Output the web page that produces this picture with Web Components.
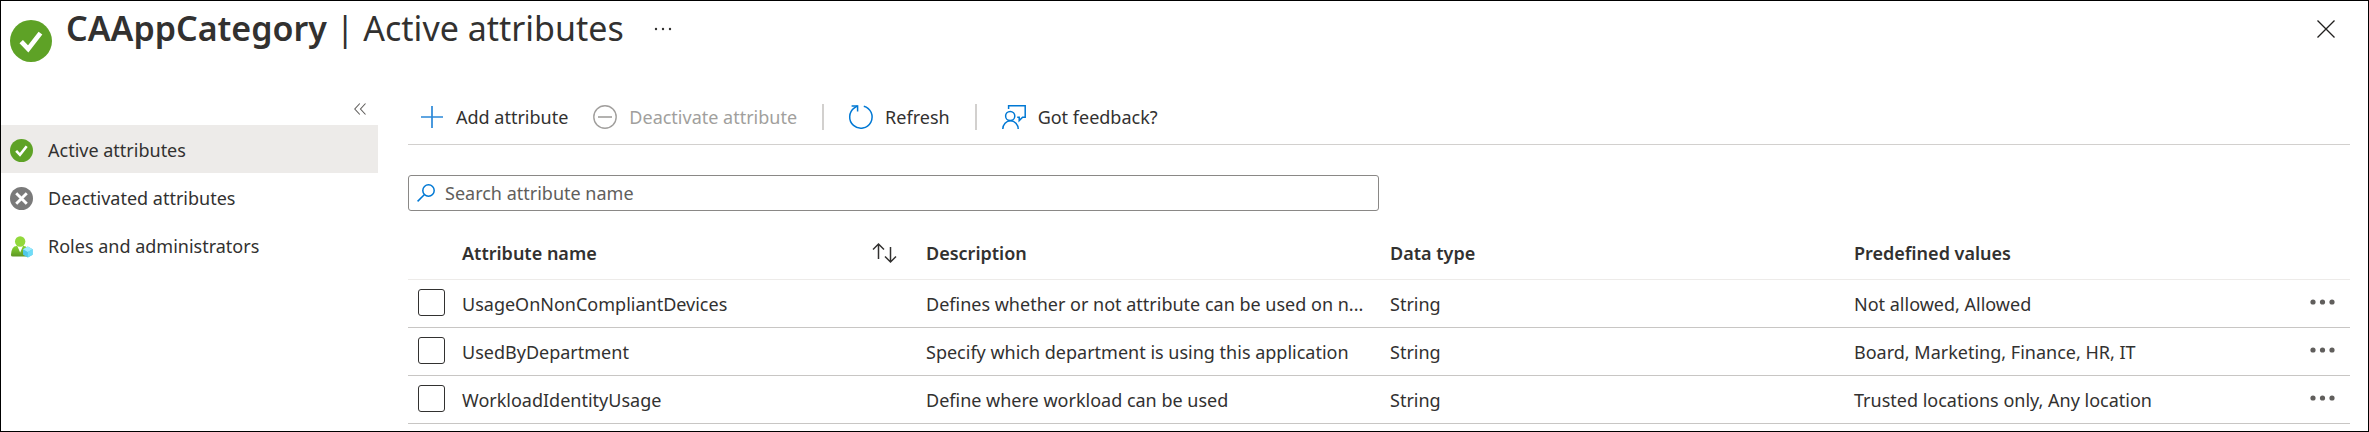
<!DOCTYPE html>
<html lang="en">
<head>
<meta charset="utf-8">
<meta name="viewport" content="width=device-width, initial-scale=1">
<title>CAAppCategory | Active attributes</title>
<style>
  body {
    margin: 0;
    background-color: #fff;
    color: #323130;
    font-family: "Noto Sans", "Open Sans", sans-serif;
    font-size: 18px;
    line-height: 24px;
  }
</style>
</head>
<body>
<attributes-page>
  <page-header slot="header" name="CAAppCategory" section="Active attributes"></page-header>
  <side-menu slot="menu">
    <menu-item icon="active" selected>Active attributes</menu-item>
    <menu-item icon="deactivated">Deactivated attributes</menu-item>
    <menu-item icon="roles">Roles and administrators</menu-item>
  </side-menu>
  <command-bar>
    <command-button icon="add">Add attribute</command-button>
    <command-button icon="minus" disabled>Deactivate attribute</command-button>
    <command-separator></command-separator>
    <command-button icon="refresh">Refresh</command-button>
    <command-separator></command-separator>
    <command-button icon="feedback">Got feedback?</command-button>
  </command-bar>
  <search-box placeholder="Search attribute name"></search-box>
  <attribute-table></attribute-table>
</attributes-page>

<script>
const icons = {
  active: `<svg viewBox="0 0 24 24"><circle cx="12" cy="12" r="12" fill="#5ea226"/>
    <path d="M6.4 12.3l4 4.2 7-9" fill="none" stroke="#fff" stroke-width="2.7"/></svg>`,
  deactivated: `<svg viewBox="0 0 24 24"><circle cx="12" cy="12" r="12" fill="#7a7a7a"/>
    <path d="M6.5 6.5l11 11M17.5 6.5l-11 11" fill="none" stroke="#fff" stroke-width="3"/></svg>`,
  roles: `<svg viewBox="0 0 24 24">
    <defs>
      <linearGradient id="person" x1="0" y1="0" x2="0" y2="1">
        <stop offset="0" stop-color="#86d633"/><stop offset="1" stop-color="#5e9624"/>
      </linearGradient>
    </defs>
    <path d="M1 20.5Q1.6 11.6 6.8 11.4H14.4Q19 11.6 20 20.5 20.2 22.5 18 22.5H3Q.8 22.5 1 20.5z" fill="url(#person)"/>
    <path d="M7.6 11.4h6l-3 6.8z" fill="#fff"/>
    <circle cx="10.6" cy="6.8" r="5.4" fill="#92d83c"/>
    <path d="M18.6 12l5 2.8v5.8l-5 2.8-5-2.8v-5.8z" fill="#50c7e8"/>
    <path d="M18.6 12l5 2.8-5 2.9-5-2.9z" fill="#9cebff"/>
    <path d="M18.6 17.7l5-2.9v5.8l-5 2.8z" fill="#6fdcf7"/></svg>`,
  add: `<svg viewBox="0 0 24 24"><path d="M12 1v22M1 12h22" fill="none" stroke="#2b88d8" stroke-width="1.7"/></svg>`,
  minus: `<svg viewBox="0 0 24 24"><circle cx="12" cy="12" r="11.2" fill="none" stroke="#a19f9d" stroke-width="1.4"/>
    <path d="M5 12h14" stroke="#a19f9d" stroke-width="1.6"/></svg>`,
  refresh: `<svg viewBox="0 0 24 24" fill="none" stroke="#0078d4" stroke-width="1.5">
    <path d="M14.8 1.2A11.2 11.2 0 1 1 5.4 2.9L8.6.9"/><path d="M2.6.9h6v5.5"/></svg>`,
  feedback: `<svg viewBox="0 0 24 24" fill="none" stroke="#0078d4" stroke-width="1.5">
    <circle cx="8.2" cy="11" r="4.6"/><path d="M.8 24a7.7 8.2 0 0 1 15.4 0"/>
    <path d="M6.6 4V.8h16.6v11.4h-2.6l-3.4 3.4v-3.4h-2"/></svg>`,
  search: `<svg viewBox="0 0 18 18" fill="none" stroke="#0078d4" stroke-width="1.5">
    <circle cx="11.5" cy="6.5" r="5.7"/><path d="M7.5 10.5L.6 17.4"/></svg>`,
  collapse: `<svg viewBox="0 0 12 12" fill="none" stroke="#605e5c" stroke-width="1.1">
    <path d="M5.8.5L.8 6l5 5.5M11.5.5l-5 5.5 5 5.5"/></svg>`,
  close: `<svg viewBox="0 0 18 18"><path d="M.5.5l17 17M17.5.5l-17 17" fill="none" stroke="#201f1e" stroke-width="1.3"/></svg>`,
  ellipsis: `<svg viewBox="0 0 18 4" fill="#323130"><circle cx="2" cy="2" r="1.2"/><circle cx="9" cy="2" r="1.2"/><circle cx="16" cy="2" r="1.2"/></svg>`,
  more: `<svg viewBox="0 0 25 6" fill="#605e5c"><circle cx="3" cy="3" r="2.6"/><circle cx="12.5" cy="3" r="2.6"/><circle cx="22" cy="3" r="2.6"/></svg>`,
  sort: `<svg viewBox="0 0 25 20" fill="none" stroke="#323130" stroke-width="1.5">
    <path d="M6.5 16V1M1 6.5L6.5 1 12 6.5M18.5 4v15M13 13.5l5.5 5.5 5.5-5.5"/></svg>`,
};

const attributes = [
  {
    name: 'UsageOnNonCompliantDevices',
    description: 'Defines whether or not attribute can be used on n...',
    type: 'String',
    values: 'Not allowed, Allowed',
  },
  {
    name: 'UsedByDepartment',
    description: 'Specify which department is using this application',
    type: 'String',
    values: 'Board, Marketing, Finance, HR, IT',
  },
  {
    name: 'WorkloadIdentityUsage',
    description: 'Define where workload can be used',
    type: 'String',
    values: 'Trusted locations only, Any location',
  },
];

const controlStyles = `
  button {
    display: flex;
    align-items: center;
    padding: 0;
    border: 0;
    background: none;
    color: inherit;
    font: inherit;
    cursor: pointer;
  }
  svg {
    display: block;
    flex: none;
    overflow: visible;
  }
`;

class BaseElement extends HTMLElement {
  connectedCallback() {
    if (this.shadowRoot) {
      return;
    }
    this.attachShadow({ mode: 'open' });
    this.shadowRoot.innerHTML = `<style>${controlStyles}</style>${this.render()}`;
  }
}

class AttributesPage extends BaseElement {
  render() {
    return `
      <style>
        :host {
          display: block;
          box-sizing: border-box;
          min-height: 100vh;
          border: 1px solid #000;
        }
        .content {
          display: flex;
          gap: 30px;
          padding-right: 18px;
        }
        aside {
          flex: 0 0 377px;
        }
        main {
          flex: 1;
          min-width: 0;
        }
      </style>
      <slot name="header"></slot>
      <div class="content">
        <aside><slot name="menu"></slot></aside>
        <main><slot></slot></main>
      </div>
    `;
  }
}

class PageHeader extends BaseElement {
  render() {
    return `
      <style>
        :host {
          display: flex;
          align-items: flex-start;
          height: 88px;
          padding: 0 33px 0 9px;
          box-sizing: border-box;
        }
        .logo svg {
          width: 42px;
          height: 42px;
          margin-top: 19px;
        }
        h1 {
          margin: 3px 30px 0 14px;
          font-size: 34px;
          line-height: 48px;
          font-weight: 400;
          white-space: nowrap;
        }
        strong {
          font-weight: 600;
        }
        button {
          height: 56px;
        }
        .ellipsis svg {
          width: 18px;
          height: 4px;
        }
        .close {
          margin-left: auto;
        }
        .close svg {
          width: 18px;
          height: 18px;
        }
      </style>
      <div class="logo">${icons.active}</div>
      <h1><strong>${this.getAttribute('name')}</strong> | ${this.getAttribute('section')}</h1>
      <button class="ellipsis" type="button" aria-label="More options">${icons.ellipsis}</button>
      <button class="close" type="button" aria-label="Close">${icons.close}</button>
    `;
  }
}

class SideMenu extends BaseElement {
  render() {
    return `
      <style>
        :host {
          display: block;
        }
        button {
          height: 36px;
          margin-left: auto;
          padding: 4px 12px 0 12px;
        }
        svg {
          width: 12px;
          height: 12px;
        }
      </style>
      <button type="button" aria-label="Collapse menu">${icons.collapse}</button>
      <nav><slot></slot></nav>
    `;
  }
}

class MenuItem extends BaseElement {
  render() {
    return `
      <style>
        :host {
          display: block;
        }
        a {
          display: flex;
          align-items: center;
          gap: 15px;
          height: 48px;
          box-sizing: border-box;
          padding: 2px 0 0 9px;
          color: inherit;
          text-decoration: none;
        }
        svg {
          width: 23px;
          height: 23px;
        }
        :host([selected]) a {
          background-color: #edebe9;
        }
      </style>
      <a href="#">${icons[this.getAttribute('icon')]}<slot></slot></a>
    `;
  }
}

class CommandBar extends BaseElement {
  render() {
    return `
      <style>
        :host {
          display: flex;
          align-items: center;
          gap: 25px;
          height: 55px;
          padding-left: 12px;
          border-bottom: 1px solid #d2d0ce;
        }
      </style>
      <slot></slot>
    `;
  }
}

class CommandButton extends BaseElement {
  render() {
    return `
      <style>
        button {
          gap: 12px;
          white-space: nowrap;
        }
        button:disabled {
          color: #a19f9d;
          cursor: default;
        }
        svg {
          width: 24px;
          height: 24px;
        }
      </style>
      <button type="button" ${this.hasAttribute('disabled') ? 'disabled' : ''}>
        ${icons[this.getAttribute('icon')]}<slot></slot>
      </button>
    `;
  }
}

class CommandSeparator extends BaseElement {
  render() {
    return `
      <style>
        :host {
          display: block;
          width: 2px;
          height: 26px;
          background-color: #d2d0ce;
        }
      </style>
    `;
  }
}

class SearchBox extends BaseElement {
  render() {
    return `
      <style>
        :host {
          display: block;
          width: 50%;
          margin: 30px 0 21px;
        }
        label {
          display: flex;
          align-items: center;
          gap: 10px;
          height: 36px;
          box-sizing: border-box;
          padding: 0 8px;
          border: 1px solid #8a8886;
          border-radius: 3px;
        }
        svg {
          width: 18px;
          height: 18px;
        }
        input {
          flex: 1;
          min-width: 0;
          padding: 0;
          border: 0;
          outline: 0;
          background: none;
          color: inherit;
          font: inherit;
        }
        input::placeholder {
          color: #605e5c;
          opacity: 1;
        }
      </style>
      <label>
        ${icons.search}
        <input type="text" placeholder="${this.getAttribute('placeholder')}" aria-label="${this.getAttribute('placeholder')}">
      </label>
    `;
  }
}

class AttributeTable extends BaseElement {
  renderRow(attribute, index) {
    return `
      <tr>
        <td class="check"><input type="checkbox" id="row-${index}"></td>
        <td><label for="row-${index}">${attribute.name}</label></td>
        <td>${attribute.description}</td>
        <td>${attribute.type}</td>
        <td>${attribute.values}</td>
        <td class="menu"><button type="button" aria-label="Row actions">${icons.more}</button></td>
      </tr>
    `;
  }

  render() {
    return `
      <style>
        :host {
          display: block;
        }
        table {
          width: 100%;
          table-layout: fixed;
          border-collapse: separate;
          border-spacing: 0;
        }
        .check-column {
          width: 46px;
        }
        .menu-column {
          width: 40px;
        }
        th, td {
          height: 48px;
          box-sizing: border-box;
          padding: 0 8px;
          border-bottom: 1px solid #c8c6c4;
          overflow: hidden;
          text-align: left;
          text-overflow: ellipsis;
          white-space: nowrap;
        }
        th {
          padding-bottom: 5px;
          border-color: #edebe9;
          font-weight: 600;
        }
        td.check {
          padding: 0 0 0 10px;
        }
        input {
          display: block;
          appearance: none;
          width: 27px;
          height: 27px;
          margin: 0 0 2px;
          border: 1px solid #323130;
          border-radius: 3px;
        }
        input:checked {
          background-color: #0078d4;
        }
        .sortable {
          display: flex;
          align-items: center;
          justify-content: space-between;
          padding-right: 13px;
        }
        .sortable svg {
          width: 25px;
          height: 20px;
        }
        td.menu {
          padding: 0;
        }
        .menu button {
          height: 43px;
          margin-bottom: 4px;
        }
        .menu svg {
          width: 25px;
          height: 6px;
        }
      </style>
      <table>
        <colgroup>
          <col class="check-column"><col><col><col><col><col class="menu-column">
        </colgroup>
        <thead>
          <tr>
            <th></th>
            <th>
              <div class="sortable">Attribute name
                <button type="button" aria-label="Sort">${icons.sort}</button>
              </div>
            </th>
            <th>Description</th>
            <th>Data type</th>
            <th>Predefined values</th>
            <th></th>
          </tr>
        </thead>
        <tbody>${attributes.map(this.renderRow).join('')}</tbody>
      </table>
    `;
  }
}

customElements.define('attributes-page', AttributesPage);
customElements.define('page-header', PageHeader);
customElements.define('side-menu', SideMenu);
customElements.define('menu-item', MenuItem);
customElements.define('command-bar', CommandBar);
customElements.define('command-button', CommandButton);
customElements.define('command-separator', CommandSeparator);
customElements.define('search-box', SearchBox);
customElements.define('attribute-table', AttributeTable);
</script>
</body>
</html>
